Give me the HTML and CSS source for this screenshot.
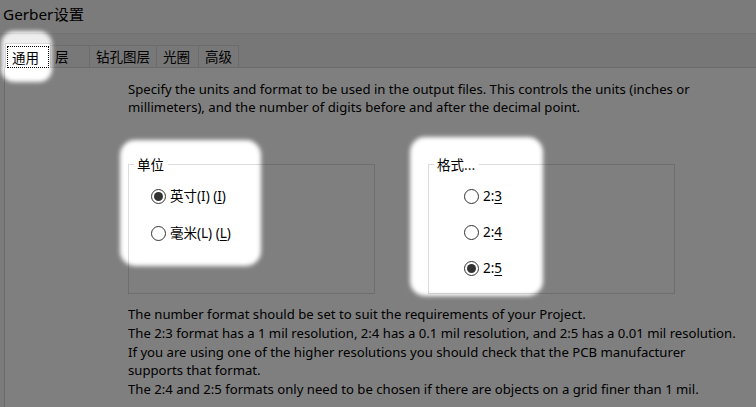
FILE: index.html
```html
<!DOCTYPE html>
<html lang="zh">
<head>
<meta charset="utf-8">
<title>Gerber设置</title>
<link rel="stylesheet" href="styles.css">
</head>
<body>
<div class="dialog">
  <div class="title">Gerber设置</div>
  <div class="tabstrip">
    <div class="tab active"><span class="focus">通用</span></div>
    <div class="tab tab-layer">层</div>
    <div class="tab tab-drill">钻孔图层</div>
    <div class="tab tab-aperture">光圈</div>
    <div class="tab tab-advanced">高级</div>
  </div>
  <div class="panel">
    <p class="intro">Specify the units and format to be used in the output files. This controls the units (inches or<br>millimeters), and the number of digits before and after the decimal point.</p>
    <div class="groups">
      <fieldset class="group">
        <legend>单位</legend>
        <div class="rows units">
          <div class="radio"><span class="dot checked"></span><span>英寸(I) (<u>I</u>)</span></div>
          <div class="radio"><span class="dot"></span><span>毫米(L) (<u>L</u>)</span></div>
        </div>
      </fieldset>
      <fieldset class="group">
        <legend>格式...</legend>
        <div class="rows format">
          <div class="radio"><span class="dot"></span><span>2:<u>3</u></span></div>
          <div class="radio"><span class="dot"></span><span>2:<u>4</u></span></div>
          <div class="radio"><span class="dot checked"></span><span>2:<u>5</u></span></div>
        </div>
      </fieldset>
    </div>
    <p class="notes">The number format should be set to suit the requirements of your Project.<br>The 2:3 format has a 1 mil resolution, 2:4 has a 0.1 mil resolution, and 2:5 has a 0.01 mil resolution.<br>If you are using one of the higher resolutions you should check that the PCB manufacturer<br>supports that format.<br>The 2:4 and 2:5 formats only need to be chosen if there are objects on a grid finer than 1 mil.</p>
  </div>
  <svg class="dim" width="756" height="407" viewBox="0 0 756 407" aria-hidden="true">
    <defs>
      <filter id="soft" x="-20%" y="-20%" width="140%" height="140%">
        <feGaussianBlur stdDeviation="2"/>
      </filter>
      <mask id="holes" maskUnits="userSpaceOnUse" x="0" y="0" width="756" height="407">
        <rect x="0" y="0" width="756" height="407" fill="#fff"/>
        <g filter="url(#soft)" fill="#000">
          <rect x="1" y="31" width="51" height="51" rx="13"/>
          <rect x="120" y="140" width="141" height="126" rx="15"/>
          <rect x="410" y="137" width="133" height="159" rx="15"/>
        </g>
      </mask>
    </defs>
    <rect x="0" y="0" width="756" height="407" fill="#000" fill-opacity="0.5" mask="url(#holes)"/>
  </svg>
</div>
</body>
</html>
```
FILE: styles.css
```css
* { box-sizing: border-box; }
html, body { margin: 0; padding: 0; }
body {
  width: 756px;
  height: 407px;
  overflow: hidden;
  background: #f6f6f6;
  font-family: "Noto Sans", "Noto Sans CJK SC", sans-serif;
  color: #000;
}
.dialog {
  position: relative;
  width: 756px;
  height: 407px;
  display: flex;
  flex-direction: column;
}
.title {
  height: 33px;
  padding: 3px 0 0 3px;
  font-size: 15.3px;
  line-height: 22px;
}
.tabstrip {
  height: 34px;
  background: #eeeeee;
  border-top: 1px solid #e4e4e4;
  display: flex;
  align-items: flex-end;
  padding-left: 5px;
  font-family: "Noto Sans CJK SC", sans-serif;
  font-size: 13.5px;
  position: relative;
  z-index: 1;
}
.tab {
  height: 22px;
  line-height: 20px;
  padding: 0 0 0 6px;
  border: 1px solid #d9d9d9;
  border-bottom: none;
  border-left: none;
  background: #f0f0f0;
  text-align: left;
}
.tab-layer { width: 39px; padding-left: 4px; }
.tab-drill { width: 67px; }
.tab-aperture { width: 42px; }
.tab-advanced { width: 40px; }
.tab.active {
  width: 46px;
  height: 25px;
  margin-bottom: -1px;
  background: #fff;
  border-left: 1px solid #d9d9d9;
  padding: 2px 1px 0;
}
.focus {
  display: block;
  height: 22px;
  line-height: 20px;
  border: 1px dotted #000;
  padding-left: 4px;
}
.panel {
  flex: 1;
  margin-left: 4px;
  background: #fff;
  border-left: 1px solid #d5d5d5;
  border-top: 1px solid #d9d9d9;
  padding: 12px 0 0 123px;
  font-size: 13.15px;
  line-height: 18px;
}
.intro { margin: 0; }
.groups {
  display: flex;
  gap: 53px;
  margin-top: 39px;
}
.group {
  width: 247px;
  height: 139px;
  margin: 0;
  padding: 0;
  border: 1px solid #dcdcdc;
}
.group legend {
  margin-left: 5px;
  padding: 0 4px 0 3px;
  font-family: "Noto Sans CJK SC", sans-serif;
  font-size: 13.5px;
  line-height: 18px;
}
.rows {
  display: flex;
  flex-direction: column;
  padding-top: 13px;
}
.units { padding-left: 22px; gap: 17px; }
.format { padding-left: 35px; gap: 16px; }
.radio {
  display: flex;
  align-items: center;
  gap: 4px;
  height: 20px;
  font-size: 13.5px;
}
.radio u { text-underline-offset: 2px; }
.dot {
  width: 15px;
  height: 15px;
  border: 1px solid #333;
  border-radius: 50%;
  background: #fff;
  display: flex;
  align-items: center;
  justify-content: center;
}
.dot.checked::after {
  content: "";
  width: 9px;
  height: 9px;
  border-radius: 50%;
  background: #333;
}
.notes {
  margin: 11px 0 0;
  line-height: 18.75px;
}
.dim {
  position: absolute;
  left: 0;
  top: 0;
  pointer-events: none;
  z-index: 2;
}
```
